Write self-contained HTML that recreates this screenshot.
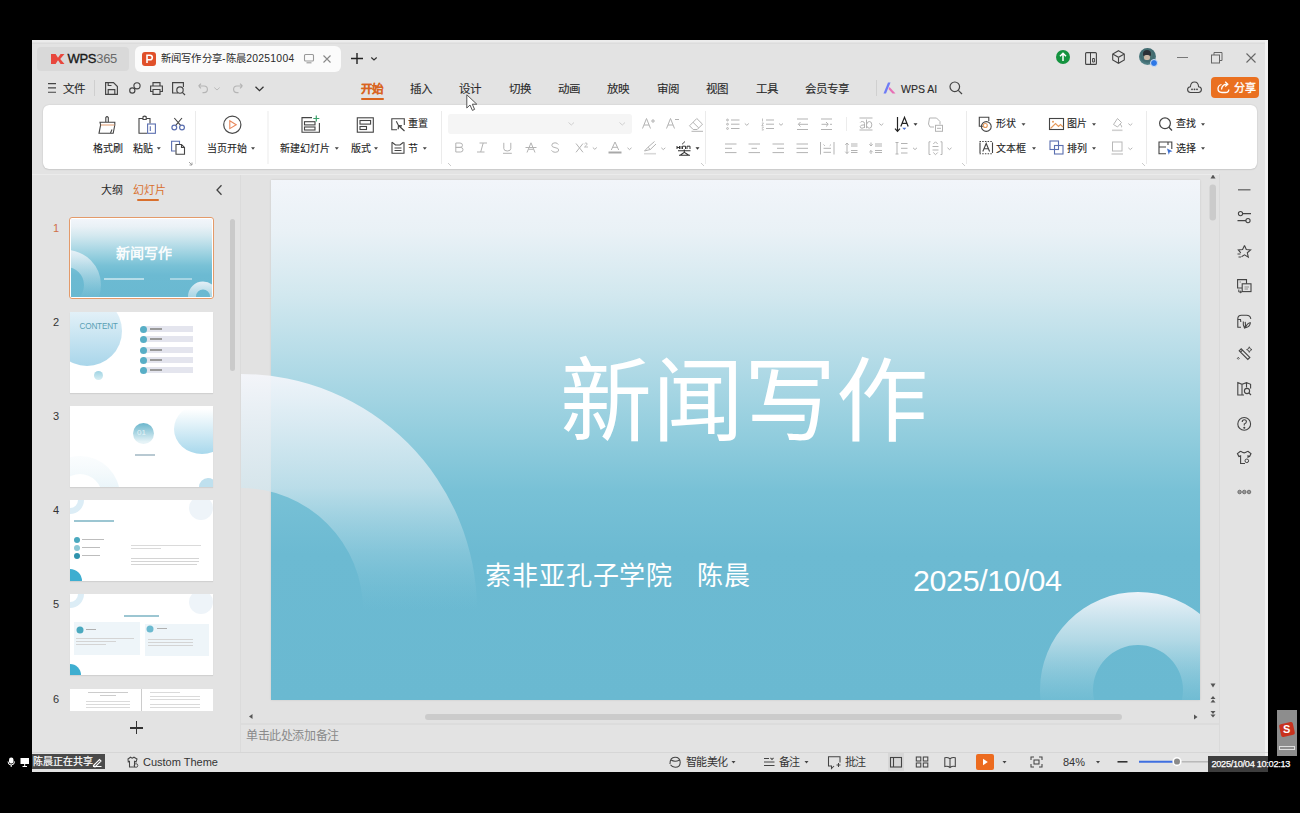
<!DOCTYPE html>
<html lang="zh-CN"><head><meta charset="utf-8">
<style>
*{box-sizing:border-box;margin:0;padding:0}
html,body{width:1300px;height:813px;overflow:hidden;background:#000;font-family:"Liberation Sans",sans-serif;color:#333;position:relative}
.a{position:absolute}
.t{position:absolute;white-space:nowrap;line-height:1}
svg.i{position:absolute;overflow:visible;fill:none;stroke:#444;stroke-width:1.1}
.m{font-size:11.5px;color:#2a2a2a;top:83.6px;-webkit-text-stroke-width:0.12px}
.r1{top:119px}
.r2{top:143.7px}
.rb{font-size:10px;color:#222;-webkit-text-stroke-width:0.1px}
.chev{position:absolute;width:0;height:0;border-left:3px solid transparent;border-right:3px solid transparent;border-top:3px solid #444}
.chg{border-top-color:#bbb}
</style></head><body>
<!-- window -->
<div class="a" style="left:32px;top:40px;width:1236px;height:732px;background:#e3e3e3"></div>
<div class="a" style="left:32px;top:40px;width:1236px;height:2px;background:#ececec"></div>
<div class="a" style="left:32px;top:43px;width:1236px;height:1px;background:#dcdcdc"></div>
<!-- right light edge -->
<div class="a" style="left:1265px;top:40px;width:3px;height:732px;background:#f2f2f2"></div>

<!-- ===== TAB BAR ===== -->
<div class="a" style="left:37px;top:47px;width:92px;height:24px;background:#d9d9d9;border-radius:4px"></div>
<svg class="i" style="left:50.5px;top:53.5px" width="14" height="11"><path d="M0,0 L4.6,0 L7,3.8 L9.6,0 L13.5,0 L9.2,5 L13.5,10 L9.6,10 L7,6.2 L4.6,10 L0,10 Z" fill="#e8473d" stroke="none"/></svg>
<div class="t" style="left:67.5px;top:52px;font-size:13px;color:#1a1a1a;letter-spacing:-0.3px"><span style="-webkit-text-stroke-width:0.35px">WPS</span><span style="color:#6a6a6a">365</span></div>
<div class="a" style="left:135px;top:46px;width:206px;height:26px;background:#fbfbfb;border-radius:6px"></div>
<div class="a" style="left:142px;top:52px;width:14px;height:14px;background:#e0502a;border-radius:3px"></div>
<svg class="i" style="left:142px;top:52px" width="14" height="14"><path d="M5,11 L5,3.2 L8,3.2 Q10.3,3.2 10.3,5.5 Q10.3,7.8 8,7.8 L5,7.8" stroke="#fff" stroke-width="1.6"/></svg>
<div class="t" style="left:160.5px;top:54px;font-size:10.4px;color:#2a2a2a;letter-spacing:0.25px">新闻写作分享-陈晨20251004</div>
<div class="a" style="left:292px;top:50px;width:10px;height:18px;background:linear-gradient(90deg,rgba(251,251,251,0),#fbfbfb)"></div>
<svg class="i" style="left:304px;top:54px;stroke:#999" width="10" height="10"><rect x="0.5" y="0.5" width="9" height="6.5" rx="1"/><path d="M2.5,8.8 L7.5,8.8"/></svg>
<svg class="i" style="left:323px;top:55px;stroke:#888" width="8" height="8"><path d="M0.5,0.5 L7.5,7.5 M7.5,0.5 L0.5,7.5"/></svg>
<svg class="i" style="left:351px;top:53px;stroke:#222;stroke-width:1.4" width="12" height="12"><path d="M6,0 L6,11 M0,5.5 L12,5.5"/></svg>
<svg class="i" style="left:371px;top:57px;stroke:#333;stroke-width:1.2" width="6" height="4"><path d="M0.3,0.5 L3,3 L5.7,0.5"/></svg>
<!-- right top icons -->
<div class="a" style="left:1056px;top:50px;width:14px;height:14px;border-radius:50%;background:#14933f"></div>
<svg class="i" style="left:1056px;top:50px;stroke:#fff;stroke-width:1.5" width="14" height="14"><path d="M7,11 L7,3.5 M4,6.3 L7,3.3 L10,6.3"/></svg>
<svg class="i" style="left:1085px;top:51.5px;stroke:#444" width="12" height="13"><rect x="0.6" y="0.6" width="10.8" height="11.8" rx="1"/><path d="M5.5,0.6 L5.5,12.4 M7.6,6.5 L9.4,6.5 L9.4,10 L7.6,10 Z" stroke-width="1"/></svg>
<svg class="i" style="left:1112px;top:50px;stroke:#444" width="13" height="14"><path d="M6.5,0.7 L12.3,4 L12.3,10 L6.5,13.3 L0.7,10 L0.7,4 Z M0.7,4 L6.5,7.3 L12.3,4 M6.5,7.3 L6.5,13.3"/></svg>
<div class="a" style="left:1139px;top:48px;width:17px;height:17px;border-radius:50%;background:radial-gradient(circle at 50% 40%,#5f7f78 0%,#3f6a70 50%,#6fa3a8 100%)"></div>
<div class="a" style="left:1143px;top:50px;width:8px;height:6px;border-radius:4px 4px 1px 1px;background:#2a3036"></div>
<div class="a" style="left:1144px;top:55px;width:6px;height:5px;border-radius:2px;background:#c9b8a6"></div>
<div class="a" style="left:1150px;top:59px;width:8px;height:8px;border-radius:50%;background:#2d77e6;border:1px solid #cfe0f7"></div>
<div class="a" style="left:1177px;top:57px;width:11px;height:1.2px;background:#777"></div>
<svg class="i" style="left:1211px;top:52px;stroke:#666;stroke-width:1" width="12" height="12"><rect x="0.5" y="3" width="8" height="8"/><path d="M3,3 L3,0.5 L11,0.5 L11,8.5 L8.5,8.5"/></svg>
<svg class="i" style="left:1246px;top:53px;stroke:#666;stroke-width:1.1" width="10" height="10"><path d="M0.5,0.5 L9.5,9.5 M9.5,0.5 L0.5,9.5"/></svg>

<!-- ===== MENU ROW ===== -->
<svg class="i" style="left:48px;top:83px;stroke:#444" width="9" height="10"><path d="M0,0.6 L8,0.6 M0,4.9 L8,4.9 M0,9.2 L8,9.2"/></svg>
<div class="t m" style="left:63px">文件</div>
<div class="a" style="left:94px;top:80px;width:1px;height:16px;background:#cfcfcf"></div>
<svg class="i" style="left:105px;top:82px;stroke:#444;stroke-width:1.15" width="13" height="13"><path d="M0.6,0.6 L8.5,0.6 L12.4,4.5 L12.4,12.4 L0.6,12.4 Z M3.2,12.4 L3.2,7.6 L9.8,7.6 L9.8,12.4 M3.2,0.6 L3.2,3.5 L6.5,3.5"/></svg>
<svg class="i" style="left:129px;top:82px;stroke:#444;stroke-width:1.15" width="12" height="12"><circle cx="8" cy="3.8" r="3.1"/><circle cx="3.3" cy="8.5" r="2.6"/><path d="M5.3,6.3 L6,5.6"/></svg>
<svg class="i" style="left:150px;top:82px;stroke:#444;stroke-width:1.15" width="13" height="13"><path d="M3,4 L3,0.6 L10,0.6 L10,4 M3,9.5 L0.6,9.5 L0.6,4 L12.4,4 L12.4,9.5 L10,9.5 M3,7.5 L10,7.5 L10,12.4 L3,12.4 Z"/></svg>
<svg class="i" style="left:172px;top:82px;stroke:#444;stroke-width:1.15" width="14" height="14"><path d="M6,11 L0.6,11 L0.6,0.6 L11.4,0.6 L11.4,5"/><circle cx="8" cy="8" r="3.2"/><path d="M10.3,10.3 L13,13"/></svg>
<svg class="i" style="left:198px;top:83px;stroke:#b5b5b5;stroke-width:1.15" width="10" height="11"><path d="M0.6,3 L3,0.6 M0.6,3 L3,5.4 M0.6,3 L6,3 Q9.4,3 9.4,6.3 Q9.4,9.6 6,9.6 L4.5,9.6"/></svg>
<svg class="i" style="left:214px;top:87px;stroke:#bbb;stroke-width:1" width="6" height="4"><path d="M0.3,0.5 L3,3 L5.7,0.5"/></svg>
<svg class="i" style="left:233px;top:83px;stroke:#b5b5b5;stroke-width:1.15" width="10" height="11"><path d="M9.4,3 L7,0.6 M9.4,3 L7,5.4 M9.4,3 L4,3 Q0.6,3 0.6,6.3 Q0.6,9.6 4,9.6 L5.5,9.6"/></svg>
<svg class="i" style="left:255px;top:86px;stroke:#333;stroke-width:1.3" width="9" height="6"><path d="M0.5,0.8 L4.5,4.6 L8.5,0.8"/></svg>
<div class="t m" style="left:361px;color:#d9641e;font-weight:bold">开始</div>
<div class="a" style="left:361px;top:98px;width:23px;height:2px;background:#d9641e;border-radius:1px"></div>
<div class="t m" style="left:410px">插入</div>
<div class="t m" style="left:459px">设计</div>
<div class="t m" style="left:509px">切换</div>
<div class="t m" style="left:558px">动画</div>
<div class="t m" style="left:607px">放映</div>
<div class="t m" style="left:657px">审阅</div>
<div class="t m" style="left:706px">视图</div>
<div class="t m" style="left:756px">工具</div>
<div class="t m" style="left:805px">会员专享</div>
<div class="a" style="left:876px;top:80px;width:1px;height:16px;background:#d0d0d0"></div>
<svg class="i" style="left:883px;top:82px;stroke:none" width="13" height="12"><path d="M5,0.5 L7.5,0.5 L3,11.5 L0.5,11.5 Z" fill="#6e7cf5"/><path d="M6.5,5 L12.5,11.5 L9.5,11.5 L5.5,7 Z" fill="#e76fb5"/></svg>
<div class="t m" style="left:901px;font-size:10.5px;top:83.5px">WPS AI</div>
<svg class="i" style="left:949px;top:81px;stroke:#444;stroke-width:1.2" width="14" height="14"><circle cx="5.8" cy="5.8" r="4.8"/><path d="M9.3,9.3 L13,13"/></svg>
<svg class="i" style="left:1187px;top:81px;stroke:#444;stroke-width:1.1" width="15" height="13"><path d="M3.5,11.5 Q0.6,11.5 0.6,8.6 Q0.6,5.8 3.4,5.7 Q3.8,1 7.5,1 Q11.2,1 11.6,5.7 Q14.4,5.8 14.4,8.6 Q14.4,11.5 11.5,11.5 Z"/><circle cx="5" cy="8.3" r="0.9" fill="#444" stroke="none"/><circle cx="7.5" cy="8.3" r="0.9" fill="#444" stroke="none"/><circle cx="10" cy="8.3" r="0.9" fill="#444" stroke="none"/></svg>
<div class="a" style="left:1211px;top:77px;width:48px;height:21px;background:#ea7020;border-radius:4px"></div>
<svg class="i" style="left:1217px;top:81px;stroke:#fff;stroke-width:1.3" width="13" height="13"><path d="M4.5,3.5 Q1,4.5 1,7.8 Q1,11.5 5,11.5 L8.5,11.5 Q11.8,11.5 11.8,8.5 M4.5,8.5 Q5,3.2 10.5,3.2 M8.2,0.8 L10.8,3.2 L8.2,5.6"/></svg>
<div class="t" style="left:1233.5px;top:82.5px;font-size:11px;color:#fff;-webkit-text-stroke-width:0.3px">分享</div>

<!-- ===== RIBBON ===== -->
<div class="a" style="left:43px;top:105px;width:1214px;height:64px;background:#fff;border-radius:6px;box-shadow:0 0 1.5px rgba(0,0,0,.16),0 1px 1.5px rgba(0,0,0,.08)"></div>
<div class="t rb r2" style="left:93px">格式刷</div>
<div class="t rb r2" style="left:133px">粘贴</div>
<div class="t rb r2" style="left:207px">当页开始</div>
<div class="t rb r2" style="left:280px">新建幻灯片</div>
<div class="t rb r2" style="left:351px">版式</div>
<div class="t rb r1" style="left:408px">重置</div>
<div class="t rb r2" style="left:408px">节</div>
<div class="a" style="left:448px;top:114px;width:184px;height:20px;background:#f5f5f5;border-radius:3px"></div>
<div class="t rb r1" style="left:996px">形状</div>
<div class="t rb r2" style="left:996px">文本框</div>
<div class="t rb r1" style="left:1067px">图片</div>
<div class="t rb r2" style="left:1067px">排列</div>
<div class="t rb r1" style="left:1176px">查找</div>
<div class="t rb r2" style="left:1176px">选择</div>

<!-- ribbon icons overlay -->
<svg class="i" style="left:0;top:0" width="1300" height="813" viewBox="0 0 1300 813">
 <g stroke="#444" stroke-width="1.1" fill="none">
  <!-- format painter -->
  <path d="M105.8,122 L105.8,117.5 Q107,115.8 108.3,117.5 L108.3,122"/>
  <path d="M100,122.3 L114.8,122.3 L114.8,125 L113.2,133.3 L99,133.3 L100.6,125 Z"/>
  <path d="M100.8,125 L114.5,125" stroke="#e3a57a"/>
  <path d="M110.5,133 L112,129.5" />
  <!-- paste -->
  <path d="M143,118.5 L139,118.5 L139,133.2 L147,133.2 M150,123.5 L150,118.5 L146.2,118.5"/>
  <path d="M143,119.5 L143,116.8 Q144.6,115.5 146.2,116.8 L146.2,119.5 Z"/>
  <rect x="147.6" y="124" width="7.8" height="9.3" stroke="#5b6fb0"/>
  <path d="M150.3,126.3 L150.3,131" stroke="#5b6fb0"/>
  <!-- scissors -->
  <path d="M174.3,118 L180.8,125.7 M182,118 L175.5,125.7"/>
  <circle cx="174.3" cy="127.5" r="2.4" stroke="#5b6fb0" stroke-width="1.2"/>
  <circle cx="182" cy="127.5" r="2.4" stroke="#5b6fb0" stroke-width="1.2"/>
  <!-- copy -->
  <path d="M175.5,151 L171.6,151 L171.6,141.3 L179.5,141.3 L179.5,144" stroke="#5b6fb0"/>
  <path d="M176,144.5 L181.5,144.5 L184.5,147.5 L184.5,154.2 L176,154.2 Z M181.5,144.5 L181.5,147.5 L184.5,147.5"/>
  <path d="M189,162 L192,165 M192,162.5 L192,165 L189.5,165" stroke="#999" stroke-width="0.9"/>
  <!-- play -->
  <circle cx="232.3" cy="124.7" r="8.6" stroke="#4a4a4a" stroke-width="1.2"/>
  <path d="M229.8,120.8 L236.2,124.7 L229.8,128.6 Z" stroke="#e8875a" stroke-width="1.1"/>
  <!-- new slide -->
  <path d="M312,117.6 L302,117.6 L302,132.2 L319.4,132.2 L319.4,123"/>
  <rect x="304.5" y="121.7" width="10.5" height="3.2"/>
  <rect x="304.5" y="127" width="10.5" height="3"/>
  <path d="M316.3,115.5 L316.3,121.5 M313.3,118.5 L319.3,118.5" stroke="#3aa06a" stroke-width="1.2"/>
  <!-- layout -->
  <rect x="357.3" y="117.8" width="16" height="14.4"/>
  <rect x="360" y="120.5" width="10.6" height="3.6"/>
  <rect x="360" y="126.5" width="6.5" height="3"/>
  <!-- reset -->
  <path d="M397,129.8 L391.8,129.8 L391.8,118.8 L404.3,118.8 L404.3,125"/>
  <path d="M396.3,121.3 L399,126.5"/>
  <path d="M398.5,125.5 L404.5,131 M398.5,125.5 L398.2,129.2 M398.5,125.5 L402,125.8" stroke-width="1.2"/>
  <!-- section -->
  <path d="M392,142.3 L395.5,145 L400,145 L403.5,142.3" />
  <path d="M392,142.3 L392,153.2 L404,153.2 L404,142.3"/>
  <path d="M394.5,148 L401.5,148 M394.5,150.5 L401.5,150.5"/>
 </g>
 <!-- font section (disabled gray) -->
 <g stroke="#b3b3b3" stroke-width="1" fill="none">
  <path d="M568.5,122.5 L571.3,125 L574,122.5" stroke="#d0d0d0"/>
  <path d="M619.5,122.5 L622.3,125 L625,122.5" stroke="#d0d0d0"/>
  <!-- A+ -->
  <path d="M642.5,128.5 L646.5,118.5 L650.5,128.5 M644,125 L649,125"/>
  <path d="M651,121 L655,121 M653,119 L653,123"/>
  <!-- A- -->
  <path d="M666.5,128.5 L670.5,118.5 L674.5,128.5 M668,125 L673,125"/>
  <path d="M675,119.5 L679,119.5"/>
  <!-- eraser -->
  <path d="M689.5,125.8 L696.8,118.5 L702.5,124.2 L697.2,129.5 L693.2,129.5 Z M693,122.3 L698.8,128"/>
  <path d="M691.5,131.3 L703,131.3"/>
  <!-- B -->
  <path d="M455.8,143 L460,143 Q462.5,143 462.5,145.3 Q462.5,147.4 460,147.4 L455.8,147.4 M455.8,147.4 L460.5,147.4 Q463,147.4 463,149.7 Q463,152 460.5,152 L455.8,152 L455.8,143"/>
  <!-- I -->
  <path d="M479.5,143 L487,143 M477,152 L484.5,152 M483.2,143 L480.7,152"/>
  <!-- U -->
  <path d="M503.8,142.8 L503.8,148.5 Q503.8,151 507.3,151 Q510.8,151 510.8,148.5 L510.8,142.8 M503,153.3 L511.8,153.3"/>
  <!-- A strike -->
  <path d="M527,152.5 L531,142.8 L535,152.5 M528.5,149.3 L533.5,149.3 M525.5,147.5 L536.5,147.5"/>
  <!-- S -->
  <path d="M558.3,144.6 Q557.5,142.8 555,142.8 Q551.8,142.8 551.8,145.3 Q551.8,147.2 555,147.6 Q558.7,148 558.7,150 Q558.7,152.3 555.2,152.3 Q552.5,152.3 551.5,150.3"/>
  <!-- X2 -->
  <path d="M576,143.5 L583,152.3 M583,143.5 L576,152.3"/>
  <path d="M584.5,144 Q585.5,142.5 586.8,143.2 Q587.6,144 586.3,145.4 L584.5,147 L588,147" stroke-width="0.9"/>
  <path d="M592.8,147.5 L594.8,149.3 L596.8,147.5"/>
  <!-- A color -->
  <path d="M611.3,150 L615,142 L618.7,150 M612.6,147.3 L617.4,147.3"/>
  <path d="M608.5,152.5 L621.5,152.5" stroke-width="2" stroke="#a8a8a8"/>
  <path d="M627.5,147.8 L629.5,149.6 L631.5,147.8"/>
  <!-- highlighter -->
  <path d="M644.5,151 L648,147.2 L654.5,141.5 M648,147.2 L650.3,149.5 L656,144 M644.5,151 L650.3,149.5"/>
  <path d="M644,153.7 L656,153.7" stroke-width="1.6" stroke="#d9d9d9"/>
  <path d="M661.3,147.8 L663.3,149.6 L665.3,147.8"/>
  <path d="M448,163 L451,166" stroke="#ccc"/>
 </g>
 <!-- pinyin icon -->
 <g stroke="#333" stroke-width="1.1" fill="none">
  <path d="M677,146 L677,149 M677,147.5 L679.5,147.5 M679.5,146 L679.5,149 M681,146 L681,149 M682.5,149 L682.5,146.2 L685.5,146.2 L685.5,149 M687,149 L687,146.2 L690,146.2 L690,149" stroke-width="1"/>
  <path d="M682,144.3 L685,141.5" stroke-width="0.9"/>
  <path d="M678,150.8 L690.5,150.8 M684.3,149.5 L684.3,152.3 M680.5,155 L684.3,152.3 L688.5,155 M679,155.3 L690,155.3"/>
 </g>
 <path d="M695.5,147.3 L699.5,147.3 L697.5,149.8 Z" fill="#333" stroke="none"/>
 <!-- paragraph section -->
 <g stroke="#b3b3b3" stroke-width="1" fill="none">
  <!-- bullets -->
  <path d="M731,120 L739.5,120 M731,124.2 L739.5,124.2 M731,128.5 L739.5,128.5"/>
  <circle cx="727.5" cy="120" r="0.9"/><circle cx="727.5" cy="124.2" r="0.9"/><circle cx="727.5" cy="128.5" r="0.9"/>
  <path d="M744.8,123.5 L746.8,125.3 L748.8,123.5"/>
  <!-- numbering -->
  <path d="M766,120 L774,120 M766,124.2 L774,124.2 M766,128.5 L774,128.5"/>
  <path d="M762.5,118.5 L762.5,121.5 M761.8,123 L763.5,123 L761.8,125.5 L763.5,125.5 M761.8,127 L763.5,127 L762.3,128.5 L763.5,130 L761.8,130" stroke-width="0.8"/>
  <path d="M779,123.5 L781,125.3 L783,123.5"/>
  <!-- outdent -->
  <path d="M797,119 L808,119 M797,129.5 L808,129.5 M798.5,124.3 L808,124.3 M800.5,122 L798.3,124.3 L800.5,126.5"/>
  <!-- indent -->
  <path d="M821,119 L832,119 M821,129.5 L832,129.5 M821.5,124.3 L828,124.3 M826,122 L828.3,124.3 L826,126.5 M830,124.3 L832,124.3"/>
  <!-- ab -->
  <path d="M859.5,118 L872.5,118 M859.5,130 L872.5,130"/>
  <path d="M864.5,128 L864.5,123.5 Q864.5,121.5 862.3,121.5 Q860.8,121.5 860.3,122.5 M864.5,124.8 Q860.2,124.8 860.2,126.6 Q860.2,128.2 862,128.2 Q864,128.2 864.5,126.5 M866.5,119.5 L866.5,128.2 M866.5,124.8 Q867.2,121.5 869.3,121.5 Q871.8,121.5 871.8,124.8 Q871.8,128.2 869.3,128.2 Q867.2,128.2 866.5,125.5"/>
  <path d="M879.3,123.5 L881.3,125.3 L883.3,123.5"/>
  <!-- text box icon -->
  <path d="M934,127 L930,127 L928.5,124 L929.5,118 L936.5,118 L940,121.5 L940,124.5"/>
  <rect x="935.5" y="125.3" width="7" height="6"/>
  <path d="M937,128.3 L941,128.3"/>
  <!-- align row -->
  <path d="M725,144 L736.5,144 M725,148.3 L732,148.3 M725,152.6 L736.5,152.6"/>
  <path d="M748.5,144 L760,144 M751.5,148.3 L757,148.3 M748.5,152.6 L760,152.6"/>
  <path d="M772.5,144 L784,144 M777,148.3 L784,148.3 M772.5,152.6 L784,152.6"/>
  <path d="M796.5,144 L808,144 M796.5,148.3 L808,148.3 M796.5,152.6 L808,152.6"/>
  <path d="M820.5,142 L820.5,154.5 M834,142 L834,154.5 M823.5,148.3 L831,148.3 M823.5,152.3 L831,152.3 M823.5,144.5 L824.8,145.8 M831,144.5 L829.7,145.8"/>
  <!-- line spacing -->
  <path d="M847,143 L847,153.5 M845.3,144.8 L847,143 L848.7,144.8 M845.3,151.7 L847,153.5 L848.7,151.7 M851,144 L857.5,144 M851,146 L857.5,146 M851,150.5 L857.5,150.5 M851,152.5 L857.5,152.5"/>
  <path d="M871,142.5 L871,146 M871,150.5 L871,154 M869.3,144.3 L871,146 L872.7,144.3 M869.3,152.2 L871,150.5 L872.7,152.2 M875,144 L882,144 M875,146 L882,146 M875,150.5 L882,150.5 M875,152.5 L882,152.5"/>
  <path d="M897,142.5 L897,154 M895.5,142.5 L898.5,142.5 M895.5,154 L898.5,154 M901,143.5 L907.5,143.5 M901,148.3 L907.5,148.3 M901,153 L907.5,153"/>
  <path d="M913,147.8 L915,149.6 L917,147.8"/>
  <path d="M930.5,141.8 L929,141.8 L929,154.5 L930.5,154.5 M940.5,141.8 L942,141.8 L942,154.5 L940.5,154.5 M932.5,146.5 L938.5,146.5 M932.5,150 L938.5,150 M933.3,144 L935.5,141.8 L937.7,144 M933.3,152.5 L935.5,154.7 L937.7,152.5"/>
  <path d="M947.5,147.8 L949.5,149.6 L951.5,147.8"/>
  <path d="M701,163 L704,166 M962,163 L965,166" stroke="#ccc"/>
 </g>
 <!-- text direction (enabled) -->
 <g stroke="#222" stroke-width="1.2" fill="none">
  <path d="M897.5,117 L897.5,131.3 M895,128.6 L897.5,131.3 L900,128.6"/>
  <path d="M900.8,126.5 L904.5,117.3 L908.2,126.5 M902.2,123.3 L906.8,123.3"/>
 </g>
 <path d="M902.3,127.8 L906.3,127.8 L904.3,130 Z" fill="#4a72d8" stroke="none"/>
 <path d="M913.5,123.3 L917.5,123.3 L915.5,125.8 Z" fill="#333" stroke="none"/>
 <!-- shape section -->
 <g stroke="#444" stroke-width="1.1" fill="none">
  <path d="M983,126.3 L979.3,126.3 L979.3,117.3 L988.8,117.3 L988.8,121"/>
  <circle cx="986.3" cy="126.5" r="4.9"/>
  <circle cx="985.3" cy="125.5" r="2" stroke="#e59a5c"/>
  <rect x="1049.5" y="118.5" width="14" height="11"/>
  <path d="M1050.5,128.5 L1055.5,123.5 L1058.5,126.5 L1060.5,124.5 L1063,127" stroke="#e59a5c"/>
  <circle cx="1053" cy="121.7" r="1" fill="#e59a5c" stroke="none"/>
  <!-- text box -->
  <path d="M979.5,141.5 L993,141.5 M979.5,153.8 L993,153.8" stroke-dasharray="1.5 1.2"/>
  <path d="M980,142.5 L980,153 M992.5,142.5 L992.5,153"/>
  <path d="M982.8,151.5 L986.2,143.5 L989.6,151.5 M984,148.8 L988.4,148.8"/>
  <!-- arrange -->
  <rect x="1050" y="141" width="8.5" height="8.5" stroke="#5b6fb0"/>
  <rect x="1054.5" y="145.5" width="8.5" height="8.5" stroke="#5b6fb0"/>
  <!-- find -->
  <circle cx="1165" cy="123.3" r="5.4" stroke-width="1.2"/>
  <path d="M1168.9,127.2 L1172,130.5" stroke-width="1.3"/>
  <!-- select -->
  <path d="M1166,153.7 L1159,153.7 L1159,142 L1171.8,142 L1171.8,149 M1159,147 L1166,147 M1168,142 L1168,145"/>
 </g>
 <path d="M1167,148.5 L1172.5,151.3 L1169.8,152 L1168.8,154.8 Z" fill="#3c6fd0" stroke="none"/>
 <g stroke="#b8b8b8" stroke-width="1" fill="none">
  <path d="M1113.5,124.5 L1117.5,118.5 L1121.5,122.5 L1117.5,127 Z M1120,124 Q1122.5,126.5 1121.5,127.3"/>
  <path d="M1112,130.3 L1122.5,130.3" stroke-width="1.6" stroke="#d0d0d0"/>
  <path d="M1128.3,123.5 L1130.3,125.3 L1132.3,123.5"/>
  <rect x="1112.5" y="142" width="9.5" height="9"/>
  <path d="M1111.5,154 L1123,154" stroke-width="1.6" stroke="#d0d0d0"/>
  <path d="M1128.3,147.8 L1130.3,149.6 L1132.3,147.8"/>
  <path d="M1142,163 L1145,166" stroke="#ccc"/>
 </g>
 <g fill="#444" stroke="none">
  <path d="M1021.5,123.3 L1025.5,123.3 L1023.5,125.8 Z"/>
  <path d="M1092,123.3 L1096,123.3 L1094,125.8 Z"/>
  <path d="M1032,147.3 L1036,147.3 L1034,149.8 Z"/>
  <path d="M1092,147.3 L1096,147.3 L1094,149.8 Z"/>
  <path d="M1201,123.3 L1205,123.3 L1203,125.8 Z"/>
  <path d="M1201,147.3 L1205,147.3 L1203,149.8 Z"/>
 </g>
 <rect x="846" y="117" width="1" height="14" fill="#ececec" stroke="none"/>
 <!-- dividers -->
 <g fill="#ebebeb" stroke="none">
  <rect x="195" y="111" width="1" height="53"/>
  <rect x="267.5" y="111" width="1" height="53"/>
  <rect x="441" y="111" width="1" height="53"/>
  <rect x="705" y="111" width="1" height="53"/>
  <rect x="966" y="111" width="1" height="53"/>
  <rect x="1146" y="111" width="1" height="53"/>
 </g>
 <!-- chevrons -->
 <g fill="#444" stroke="none">
  <path d="M156.8,147.3 L160.8,147.3 L158.8,149.8 Z"/>
  <path d="M251,147.3 L255,147.3 L253,149.8 Z"/>
  <path d="M334.8,147.3 L338.8,147.3 L336.8,149.8 Z"/>
  <path d="M374,147.3 L378,147.3 L376,149.8 Z"/>
  <path d="M422.8,147.3 L426.8,147.3 L424.8,149.8 Z"/>
 </g>
</svg>
<!-- ===== LEFT PANEL ===== -->
<div class="t" style="left:101px;top:184.5px;font-size:11px;color:#2a2a2a">大纲</div>
<div class="t" style="left:132.5px;top:184.5px;font-size:11px;color:#d9702e">幻灯片</div>
<div class="a" style="left:137px;top:199px;width:22px;height:2px;background:#d9702e;border-radius:1px"></div>

<!-- panel scrollbar -->
<div class="a" style="left:230px;top:219px;width:5px;height:152px;background:#cacaca;border-radius:3px"></div>
<!-- slide numbers -->
<div class="t" style="left:53px;top:223px;font-size:11px;color:#d0704a">1</div>
<div class="t" style="left:53px;top:317px;font-size:11px;color:#333">2</div>
<div class="t" style="left:53px;top:411px;font-size:11px;color:#333">3</div>
<div class="t" style="left:53px;top:505px;font-size:11px;color:#333">4</div>
<div class="t" style="left:53px;top:599px;font-size:11px;color:#333">5</div>
<div class="t" style="left:53px;top:694px;font-size:11px;color:#333">6</div>
<!-- thumb 1 -->
<div class="a" style="left:69px;top:217px;width:145px;height:82px;border:1.5px solid #e39a6a;border-radius:3px;background:#fff"></div>
<div class="a" style="left:71px;top:219px;width:141px;height:78px;overflow:hidden;background:linear-gradient(#f2f5fa 0%,#e9f1f6 10%,#d2e8ef 22%,#b3dbe7 35%,#94cede 48%,#78c1d6 60%,#6cbad2 72%,#6ab9d1 100%)">
  <svg width="141" height="78" style="position:absolute;left:0;top:0">
    <defs>
      <linearGradient id="tg1" x1="0" y1="0" x2="0" y2="1">
        <stop offset="0" stop-color="#f4f6fb" stop-opacity="0.85"/>
        <stop offset="0.35" stop-color="#d2e7ef" stop-opacity="0.5"/>
        <stop offset="0.7" stop-color="#b0d9e6" stop-opacity="0"/>
      </linearGradient>
      <linearGradient id="tg1b" x1="0" y1="0" x2="0" y2="1">
        <stop offset="0" stop-color="#f4f6fb" stop-opacity="0.9"/>
        <stop offset="0.5" stop-color="#d6eaf1" stop-opacity="0.6"/>
        <stop offset="1" stop-color="#b0d9e6" stop-opacity="0.1"/>
      </linearGradient>
    </defs>
    <path fill="url(#tg1)" fill-rule="evenodd" d="M-40,66 a35,35 0 1,0 70,0 a35,35 0 1,0 -70,0 Z M-23,66 a18,18 0 1,0 36,0 a18,18 0 1,0 -36,0 Z"/>
    <path fill="url(#tg1b)" fill-rule="evenodd" d="M117,77.5 a15,15 0 1,0 30,0 a15,15 0 1,0 -30,0 Z M125,77.5 a7,7 0 1,0 14,0 a7,7 0 1,0 -14,0 Z"/>
  </svg>
  <div class="t" style="left:45px;top:26.5px;font-size:14px;color:#fff;font-weight:bold;opacity:.95">新闻写作</div>
  <div class="a" style="left:33px;top:58.5px;width:40px;height:2px;background:rgba(255,255,255,.5)"></div>
  <div class="a" style="left:99px;top:59px;width:22px;height:1.5px;background:rgba(255,255,255,.4)"></div>
</div>
<!-- thumb 2 -->
<div class="a" style="left:70px;top:312px;width:143px;height:81px;background:#fff;overflow:hidden;box-shadow:0 1px 1px rgba(0,0,0,.08)">
  <div class="a" style="left:-18px;top:-16px;width:70px;height:70px;border-radius:50%;background:linear-gradient(#f3f8fc,#a9d6ea)"></div>
  <div class="t" style="left:9.5px;top:11px;font-size:8.2px;color:#5a9fb4;letter-spacing:-0.2px">CONTENT</div>
  <div class="a" style="left:24px;top:59px;width:9px;height:9px;border-radius:50%;background:linear-gradient(#9fd3e3,#d8eef3)"></div>
  <div class="a" style="left:73px;top:14px;width:50px;height:6px;background:#e4e5ee"></div>
  <div class="a" style="left:73px;top:24px;width:50px;height:6px;background:#e4e5ee"></div>
  <div class="a" style="left:73px;top:35px;width:50px;height:6px;background:#e4e5ee"></div>
  <div class="a" style="left:73px;top:45px;width:50px;height:6px;background:#e4e5ee"></div>
  <div class="a" style="left:73px;top:55px;width:50px;height:6px;background:#e4e5ee"></div>
  <div class="a" style="left:70px;top:14px;width:7px;height:7px;border-radius:50%;background:#58aec6"></div>
  <div class="a" style="left:70px;top:24px;width:7px;height:7px;border-radius:50%;background:#58aec6"></div>
  <div class="a" style="left:70px;top:35px;width:7px;height:7px;border-radius:50%;background:#58aec6"></div>
  <div class="a" style="left:70px;top:45px;width:7px;height:7px;border-radius:50%;background:#58aec6"></div>
  <div class="a" style="left:70px;top:55px;width:7px;height:7px;border-radius:50%;background:#58aec6"></div>
  <div class="a" style="left:80px;top:16px;width:12px;height:2px;background:#999"></div>
  <div class="a" style="left:80px;top:26px;width:12px;height:2px;background:#999"></div>
  <div class="a" style="left:80px;top:37px;width:12px;height:2px;background:#999"></div>
  <div class="a" style="left:80px;top:47px;width:12px;height:2px;background:#999"></div>
  <div class="a" style="left:80px;top:57px;width:12px;height:2px;background:#999"></div>
</div>
<!-- thumb 3 -->
<div class="a" style="left:70px;top:406px;width:143px;height:81px;background:#fff;overflow:hidden;box-shadow:0 1px 1px rgba(0,0,0,.08)">
  <div class="a" style="left:104px;top:-2px;width:56px;height:50px;border-radius:50%;background:linear-gradient(#fff 10%,#a8d8ec)"></div>
  <div class="a" style="left:63px;top:17px;width:21px;height:21px;border-radius:50%;background:linear-gradient(#6bb6cc,#e6f3f7 90%)"></div>
  <div class="t" style="left:67px;top:23px;font-size:8px;color:rgba(255,255,255,.7)">01</div>
  <div class="a" style="left:65px;top:48px;width:20px;height:2px;background:#b8c9d2"></div>
  <svg width="143" height="81" style="position:absolute;left:0;top:0">
    <defs><linearGradient id="tg3" x1="0" y1="0" x2="0" y2="1"><stop offset="0" stop-color="#e9f4f9" stop-opacity="0.2"/><stop offset="0.6" stop-color="#d5ebf4" stop-opacity="0.8"/><stop offset="1" stop-color="#9fd0e6"/></linearGradient></defs>
    <path fill="url(#tg3)" fill-rule="evenodd" d="M-30,90 a40,40 0 1,0 80,0 a40,40 0 1,0 -80,0 Z M-12,90 a22,22 0 1,0 44,0 a22,22 0 1,0 -44,0 Z"/>
    <circle cx="138" cy="81" r="9" fill="#bfe0ee"/>
  </svg>
</div>
<!-- thumb 4 -->
<div class="a" style="left:70px;top:500px;width:143px;height:81px;background:#fff;overflow:hidden;box-shadow:0 1px 1px rgba(0,0,0,.08)">
  <svg width="143" height="81" style="position:absolute;left:0;top:0">
    <path fill="#dcedf6" fill-rule="evenodd" d="M-14,0 a14,14 0 1,0 28,0 a14,14 0 1,0 -28,0 Z M-8,0 a8,8 0 1,0 16,0 a8,8 0 1,0 -16,0 Z"/>
    <circle cx="131" cy="8" r="12" fill="#eef4f9"/>
    <path fill="#3eaed0" d="M0,69 a12,12 0 0,1 12,12 L0,81 Z"/>
    <circle cx="7" cy="40" r="3" fill="#4aa9bf"/><circle cx="7" cy="48" r="3" fill="#8cc8d6"/><circle cx="7" cy="56" r="3" fill="#2f93ad"/>
  </svg>
  <div class="a" style="left:4px;top:20px;width:40px;height:1.6px;background:#9cc6d2"></div>
  <div class="a" style="left:12px;top:39px;width:22px;height:1.4px;background:#bdbdbd"></div>
  <div class="a" style="left:12px;top:47px;width:18px;height:1.4px;background:#bdbdbd"></div>
  <div class="a" style="left:12px;top:55px;width:18px;height:1.4px;background:#bdbdbd"></div>
  <div class="a" style="left:61px;top:45px;width:70px;height:1px;background:#dadada"></div>
  <div class="a" style="left:61px;top:48px;width:30px;height:1px;background:#dadada"></div>
  <div class="a" style="left:61px;top:58px;width:68px;height:1px;background:#d4d4d4"></div>
  <div class="a" style="left:61px;top:61px;width:68px;height:1px;background:#d4d4d4"></div>
  <div class="a" style="left:61px;top:64px;width:66px;height:1px;background:#d4d4d4"></div>
</div>
<!-- thumb 5 -->
<div class="a" style="left:70px;top:594px;width:143px;height:81px;background:#fff;overflow:hidden;box-shadow:0 1px 1px rgba(0,0,0,.08)">
  <svg width="143" height="81" style="position:absolute;left:0;top:0">
    <path fill="#dcedf6" fill-rule="evenodd" d="M-14,0 a14,14 0 1,0 28,0 a14,14 0 1,0 -28,0 Z M-8,0 a8,8 0 1,0 16,0 a8,8 0 1,0 -16,0 Z"/>
    <circle cx="131" cy="8" r="12" fill="#eef4f9"/>
    <path fill="#3eaed0" d="M0,70 a11,11 0 0,1 11,11 L0,81 Z"/>
    <rect x="4" y="28" width="66" height="33" fill="#eef5f9"/>
    <rect x="75" y="30" width="64" height="32" fill="#eef5f9"/>
    <circle cx="10" cy="36" r="3.5" fill="#4aa9bf"/><circle cx="80" cy="35" r="3.5" fill="#6cbad0"/>
  </svg>
  <div class="a" style="left:54px;top:21px;width:35px;height:1.6px;background:#9cc6d2"></div>
  <div class="a" style="left:16px;top:35px;width:10px;height:1.4px;background:#b0b0b0"></div>
  <div class="a" style="left:87px;top:34px;width:10px;height:1.4px;background:#b0b0b0"></div>
  <div class="a" style="left:6px;top:44px;width:58px;height:1px;background:#d4d4d4"></div>
  <div class="a" style="left:6px;top:47px;width:40px;height:1px;background:#d4d4d4"></div>
  <div class="a" style="left:6px;top:50px;width:30px;height:1px;background:#d4d4d4"></div>
  <div class="a" style="left:78px;top:45px;width:45px;height:1px;background:#d4d4d4"></div>
  <div class="a" style="left:78px;top:48px;width:45px;height:1px;background:#d4d4d4"></div>
  <div class="a" style="left:78px;top:51px;width:45px;height:1px;background:#d4d4d4"></div>
</div>
<!-- thumb 6 -->
<div class="a" style="left:70px;top:689px;width:143px;height:22px;background:#fff;overflow:hidden">
  <div class="a" style="left:71px;top:0;width:1px;height:22px;background:#ccc"></div>
  <div class="a" style="left:18px;top:3px;width:40px;height:1px;background:#ccc"></div>
  <div class="a" style="left:30px;top:6px;width:16px;height:1px;background:#ccc"></div>
  <div class="a" style="left:16px;top:12px;width:44px;height:1px;background:#dadada"></div>
  <div class="a" style="left:16px;top:15px;width:44px;height:1px;background:#dadada"></div>
  <div class="a" style="left:16px;top:18px;width:44px;height:1px;background:#dadada"></div>
  <div class="a" style="left:80px;top:3px;width:30px;height:1px;background:#dadada"></div>
  <div class="a" style="left:80px;top:7px;width:50px;height:1px;background:#dadada"></div>
  <div class="a" style="left:80px;top:10px;width:50px;height:1px;background:#dadada"></div>
  <div class="a" style="left:80px;top:15px;width:50px;height:1px;background:#dadada"></div>
  <div class="a" style="left:80px;top:18px;width:50px;height:1px;background:#dadada"></div>
</div>
<!-- add slide + -->
<div class="a" style="left:130px;top:727px;width:13px;height:1.5px;background:#333"></div>
<div class="a" style="left:135.8px;top:721px;width:1.5px;height:13px;background:#333"></div>

<!-- ===== CANVAS ===== -->
<div class="a" style="left:241px;top:174px;width:978px;height:550px;background:#e2e2e2"></div>
<div class="a" id="slide" style="left:271px;top:180px;width:929px;height:520px;box-shadow:0 0 2px rgba(0,0,0,.12);background:linear-gradient(#f2f5fa 0%,#e9f1f6 10%,#d2e8ef 22%,#b3dbe7 35%,#94cede 48%,#78c1d6 60%,#6cbad2 72%,#6ab9d1 100%);overflow:hidden">
  <svg width="929" height="520" style="position:absolute;left:0;top:0">
    <defs>
      <linearGradient id="rg2" x1="0" y1="412" x2="0" y2="520" gradientUnits="userSpaceOnUse">
        <stop offset="0" stop-color="#f4f6fb" stop-opacity="0.95"/>
        <stop offset="0.45" stop-color="#d0e6ee" stop-opacity="0.7"/>
        <stop offset="1" stop-color="#a3d4e2" stop-opacity="0.12"/>
      </linearGradient>
    </defs>
    <path fill="url(#rg2)" fill-rule="evenodd" d="M769,510 a98,98 0 1,0 196,0 a98,98 0 1,0 -196,0 Z M822,510 a45,45 0 1,0 90,0 a45,45 0 1,0 -90,0 Z"/>
  </svg>
  <div class="t" style="left:289px;top:176px;font-size:92px;color:#fff;font-weight:500">新闻写作</div>
  <div class="t" style="left:214px;top:383px;font-size:26px;color:#fff;letter-spacing:0.9px">索非亚孔子学院<span style="display:inline-block;width:24px"></span>陈晨</div>
  <div class="t" style="left:642px;top:385px;font-size:30.4px;color:#fff;letter-spacing:-0.35px">2025/10/04</div>
</div>
<!-- left big ring, overlays canvas -->
<svg width="978" height="550" style="position:absolute;left:241px;top:174px;overflow:hidden">
  <defs>
    <linearGradient id="rg1" x1="0" y1="202" x2="0" y2="436" gradientUnits="userSpaceOnUse">
      <stop offset="0" stop-color="#f4f6fb" stop-opacity="0.92"/>
      <stop offset="0.48" stop-color="#d2e7ef" stop-opacity="0.72"/>
      <stop offset="0.78" stop-color="#b0d9e6" stop-opacity="0.3"/>
      <stop offset="1" stop-color="#8ccbdd" stop-opacity="0"/>
    </linearGradient>
  </defs>
  <path fill="url(#rg1)" fill-rule="evenodd" d="M-236,436 a236,236 0 1,0 472,0 a236,236 0 1,0 -472,0 Z M-122,436 a122,122 0 1,0 244,0 a122,122 0 1,0 -244,0 Z"/>
</svg>
<!-- canvas scrollbars -->
<svg class="i" style="left:0;top:0" width="1300" height="813" viewBox="0 0 1300 813">
 <g fill="#555" stroke="none">
  <path d="M1210.5,178.5 L1215.5,178.5 L1213,174.5 Z"/>
  <path d="M1210.5,683.5 L1215.5,683.5 L1213,687.5 Z"/>
  <path d="M1210.5,699 L1215.5,699 L1213,696 Z M1210.5,702.5 L1215.5,702.5 L1213,699.5 Z"/>
  <path d="M1210.5,711 L1215.5,711 L1213,714 Z M1210.5,714.5 L1215.5,714.5 L1213,717.5 Z"/>
  <path d="M249,716.5 L252.5,714 L252.5,719 Z"/>
  <path d="M1197.5,717 L1194,714.5 L1194,719.5 Z"/>
 </g>
 <rect x="1209.5" y="184.5" width="6.5" height="36" rx="3.2" fill="#cbcbcb" stroke="none"/>
 <rect x="425" y="714" width="697" height="6" rx="3" fill="#cbcbcb" stroke="none"/>
 <rect x="241" y="723.5" width="978" height="1" fill="#d6d6d6" stroke="none"/>
 <rect x="1219" y="174" width="1" height="578" fill="#dadada" stroke="none"/>
 <rect x="240" y="174" width="1" height="578" fill="#dbdbdb" stroke="none"/>
 <rect x="32" y="174" width="1187" height="1" fill="#ebebeb" stroke="none"/>
 <path d="M221.5,185.3 L217,190 L221.5,194.7" stroke="#444" stroke-width="1.3" fill="none"/>
 <rect x="32" y="752" width="1236" height="1" fill="#d6d6d6" stroke="none"/>
 <!-- sidebar icons -->
 <g stroke="#444" stroke-width="1.1" fill="none">
  <path d="M1238,189.8 L1250.5,189.8" stroke="#666" stroke-width="1.3"/>
  <path d="M1242.5,213.6 L1251,213.6 M1237.5,220.6 L1246,220.6"/>
  <circle cx="1240.5" cy="213.6" r="2.1"/><circle cx="1248" cy="220.6" r="2.1"/>
  <path d="M1244.5,245.5 L1246.3,249.5 L1250.6,249.9 L1247.3,252.8 L1248.3,257.2 L1244.5,254.9 L1241.5,256.7 M1240.8,252.8 L1238.3,249.9 L1242.6,249.5 L1244.5,245.5"/>
  <path d="M1237.5,254 L1240.5,254 M1238.5,257 L1241,257" stroke-width="1"/>
  <path d="M1242,288 L1237.6,288 L1237.6,279.6 L1246.5,279.6 L1246.5,283.8"/>
  <rect x="1242.2" y="283.8" width="8.8" height="7.8"/>
  <path d="M1238.8,289.5 L1238.8,292 L1241.5,292 M1240,290.8 L1241.5,292 L1240,293" stroke-width="1"/>
  <path d="M1239.5,282 L1241,282 M1244.5,287 L1249,287 M1244.5,289 L1248,289" stroke-width="0.8" stroke="#777"/>
  <path d="M1241,327.3 L1237.8,327.3 L1237.8,318.8 Q1237.8,315.3 1241.5,315.3 L1246.5,315.3 Q1250.3,315.3 1250.8,318.8"/>
  <path d="M1237.8,319.5 L1240.5,319.5 L1240.8,322"/>
  <path d="M1243.3,321.5 Q1242.8,325.5 1244.5,328 Q1246.2,325.5 1245.2,321.8 M1250.5,322.5 Q1247,323.2 1245.5,327.8 Q1249.8,327 1250.5,322.5"/>
  <path d="M1239.2,350.8 L1241.2,348.8 L1249.8,357.4 L1247.8,359.4 Z M1242.5,350.1 L1240.5,352.1" stroke-width="1.2"/>
  <path d="M1249.3,346.8 L1250.2,348.8 L1252,349.6 L1250.2,350.4 L1249.3,352.4 L1248.4,350.4 L1246.6,349.6 L1248.4,348.8 Z" stroke-width="0.9"/>
  <path d="M1238.3,357.3 L1239.3,358.3 L1238.3,359.3 L1237.3,358.3 Z" stroke-width="0.9"/>
  <path d="M1244,395 L1237.8,395 L1237.8,382.5 L1242,384.3 L1246.5,382.5 L1250.6,384.3 L1250.6,388.5 M1242,384.3 L1242,395 M1246.5,382.5 L1246.5,387.5"/>
  <circle cx="1247" cy="391" r="2.6"/><path d="M1249,393 L1251,395"/>
  <circle cx="1244.2" cy="423.9" r="6.4"/>
  <path d="M1242.2,422 Q1242.2,419.8 1244.3,419.8 Q1246.4,419.8 1246.4,421.8 Q1246.4,423.2 1244.3,424 L1244.3,425.5"/>
  <circle cx="1244.3" cy="427.7" r="0.5" fill="#444"/>
  <path d="M1240.5,451.2 L1237.4,453.6 L1238.9,456.6 L1240.6,455.9 L1240.6,463.5 L1245,463.5 M1247.8,451.2 L1251,453.6 L1249.6,456.6 L1248,455.9 L1248,458 M1240.5,451.2 Q1244.2,454.5 1247.8,451.2"/>
  <circle cx="1246.8" cy="460.8" r="1.8" stroke-width="1"/>
 </g>
 <g fill="#555" stroke="none">
  <circle cx="1239.6" cy="492" r="1.8" fill="#9a9a9a" stroke="#555" stroke-width="0.7"/><circle cx="1244.3" cy="492" r="1.8" fill="#9a9a9a" stroke="#555" stroke-width="0.7"/><circle cx="1249" cy="492" r="1.8" fill="#9a9a9a" stroke="#555" stroke-width="0.7"/>
 </g>
 <!-- status bar icons -->
 <g stroke="#444" stroke-width="1.05" fill="none">
  <path d="M128,759 L130.5,757.2 Q132.2,759 134,757.2 L137,759 L136,762 L134.5,761.3 L134.5,767 L129.5,767 L129.5,761.3 L128.3,762 Z" />
  <circle cx="136" cy="765.5" r="1.8" stroke-width="0.9"/>
  <path d="M670,764 Q670,757.2 675,757.2 Q680.2,757.2 680.2,762.5 Q680.2,767.2 675.2,767.2 Q672,767.2 670.5,764.8 M671,760 Q675,762.5 679.5,760"/>
  <path d="M731.5,761 L735.5,761 L733.5,763.5 Z" fill="#444" stroke="none"/>
  <path d="M764,758.5 L769,758.5 M764,762 L774.5,762 M764,765.5 L774.5,765.5 M770.5,757.8 L772,759.5 L773.5,757.8"/>
  <path d="M804.5,761 L808.5,761 L806.5,763.5 Z" fill="#444" stroke="none"/>
  <path d="M832,766 L828.5,766 L828.5,756.8 L840,756.8 L840,762.5 M831.5,766 L831.5,768.5 L834,766 M836.5,765 L840.5,765 M838.5,763 L838.5,767"/>
  <rect x="890.5" y="757" width="11" height="9.5"/>
  <path d="M893.5,757 L893.5,766.5"/>
  <rect x="916.3" y="757" width="4.5" height="4"/><rect x="923.3" y="757" width="4.5" height="4"/>
  <rect x="916.3" y="763" width="4.5" height="4"/><rect x="923.3" y="763" width="4.5" height="4"/>
  <path d="M950,758.8 Q947.5,757 944.8,757.8 L944.8,766.6 Q947.5,765.8 950,767.5 Q952.5,765.8 955.3,766.6 L955.3,757.8 Q952.5,757 950,758.8 L950,767.5"/>
  <path d="M1002.5,761 L1006.5,761 L1004.5,763.5 Z" fill="#444" stroke="none"/>
  <path d="M1031,760 L1031,757 L1034,757 M1039,757 L1042,757 L1042,760 M1042,764 L1042,767 L1039,767 M1034,767 L1031,767 L1031,764"/>
  <rect x="1034" y="760" width="5" height="4"/>
  <path d="M1096,761 L1100,761 L1098,763.5 Z" fill="#444" stroke="none"/>
  <path d="M1117.5,761.8 L1127.5,761.8" stroke="#333" stroke-width="1.6"/>
  <path d="M1139,761.8 L1173,761.8" stroke="#3f6fe0" stroke-width="2"/>
  <path d="M1181,761.8 L1208,761.8" stroke="#b5b5b5" stroke-width="1.4"/>
 </g>
 <circle cx="1177" cy="761.6" r="3.8" fill="#8a8a8a" stroke="#fff" stroke-width="1.6"/>
</svg>
<!-- notes -->
<div class="t" style="left:246px;top:729.5px;font-size:12px;color:#8a8a8a;letter-spacing:-0.4px">单击此处添加备注</div>

<!-- ===== STATUS BAR ===== -->
<div class="a" style="left:888px;top:753px;width:16px;height:18px;background:#d7d7d7"></div>
<div class="a" style="left:976px;top:754px;width:17.5px;height:16px;background:#ec6b1f;border-radius:2px"></div>
<svg class="i" style="left:976px;top:754px" width="18" height="16"><path d="M7,4.8 L11.8,8 L7,11.2 Z" fill="#fff" stroke="none"/></svg>
<svg class="i" style="left:888px;top:757px;stroke:#444" width="16" height="12"><rect x="2.5" y="0.5" width="11" height="9.5"/><path d="M5.5,0.5 L5.5,10"/></svg>
<div class="t" style="left:143px;top:756.5px;font-size:11px;color:#333">Custom Theme</div>
<div class="t" style="left:686px;top:756.5px;font-size:11px;color:#333;letter-spacing:-0.6px">智能美化</div>
<div class="t" style="left:779px;top:756.5px;font-size:11px;color:#333;letter-spacing:-0.6px">备注</div>
<div class="t" style="left:845px;top:756.5px;font-size:11px;color:#333;letter-spacing:-0.6px">批注</div>
<div class="t" style="left:1063px;top:757px;font-size:11px;color:#333">84%</div>
<!-- timestamp overlay -->
<div class="a" style="left:1208px;top:756px;width:60px;height:16px;background:#3d3d3d"></div>
<div class="t" style="left:1211.5px;top:759.5px;font-size:9.2px;color:#fff;-webkit-text-stroke-width:0.25px;letter-spacing:-0.3px">2025/10/04 10:02:13</div>
<!-- sogou ime -->
<div class="a" style="left:1277px;top:710px;width:20px;height:46px;background:#8d8d8d"></div>
<div class="a" style="left:1280px;top:723px;width:14px;height:13px;background:#c8321e;border-radius:2px;transform:rotate(-12deg)"></div>
<div class="t" style="left:1283px;top:724px;font-size:11px;color:#fff;font-weight:bold">S</div>
<div class="a" style="left:1279px;top:746px;width:16px;height:4px;border:1px solid #ddd"></div>

<!-- share label -->
<div class="a" style="left:32px;top:754px;width:73px;height:14.5px;background:#4a4a4a"></div>
<div class="t" style="left:33px;top:756.5px;font-size:10px;color:#fff;-webkit-text-stroke:0.2px #fff">陈晨正在共享</div>
<svg class="i" style="left:0;top:0;stroke:#fff" width="110" height="780" viewBox="0 0 110 780"><path d="M93,766.5 L101.5,766.5 M93.5,765.5 L99.5,759.5 L101,761 L95,767 Z" stroke-width="1.1"/>
<rect x="9" y="757.5" width="4.5" height="6" rx="2.2" fill="#fff" stroke="none"/><path d="M8,761.5 Q8,765 11.2,765 Q14.5,765 14.5,761.5 M11.2,765 L11.2,767" stroke-width="1"/>
<rect x="20.5" y="758" width="8.5" height="6" fill="#fff" stroke="none"/><path d="M24.7,764 L24.7,766.5 M22.5,766.5 L27,766.5" stroke-width="1"/></svg>

<!-- cursor -->
<svg class="i" style="left:466px;top:94px" width="13" height="18"><path d="M0.8,0.8 L0.8,14 L4,11 L6.4,16.4 L8.6,15.4 L6.3,10.2 L10.8,10.2 Z" fill="#fff" stroke="#555" stroke-width="1"/></svg>
</body></html>
